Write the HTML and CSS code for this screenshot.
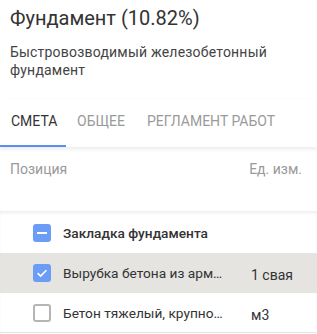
FILE: index.html
```html
<!DOCTYPE html>
<html lang="ru">
<head>
<meta charset="utf-8">
<link rel="stylesheet" href="styles.css">
</head>
<body>
<div class="page">
  <h1 class="title">Фундамент (10.82%)</h1>
  <p class="desc">Быстровозводимый железобетонный фундамент</p>
  <div class="tabs">
    <div class="tab active">СМЕТА</div>
    <div class="tab">ОБЩЕЕ</div>
    <div class="tab">РЕГЛАМЕНТ РАБОТ</div>
  </div>
  <div class="head">
    <span class="h-name">Позиция</span>
    <span class="h-unit">Ед. изм.</span>
  </div>
  <div class="rows">
    <div class="row">
      <span class="cb cb-ind"><svg width="18" height="18" viewBox="0 0 18 18"><rect x="4" y="8" width="10" height="2" fill="#fff"/></svg></span>
      <span class="name bold">Закладка фундамента</span>
    </div>
    <div class="row sel">
      <span class="cb cb-on"><svg width="18" height="18" viewBox="0 0 18 18"><path d="M4.6 9.2 L7.6 12.1 L13.4 6.2" fill="none" stroke="#fff" stroke-width="1.6"/></svg></span>
      <span class="name">Вырубка бетона из арматурного каркаса</span>
      <span class="unit">1 свая</span>
    </div>
    <div class="row last">
      <span class="cb cb-off"></span>
      <span class="name">Бетон тяжелый, крупность заполнителя</span>
      <span class="unit">м3</span>
    </div>
  </div>
</div>
</body>
</html>
```
FILE: styles.css
```css
* { box-sizing: border-box; }
html, body { margin: 0; padding: 0; background: #fff; }
body {
  font-family: Roboto, "Noto Sans", Arial, sans-serif;
  color: #333;
  width: 317px;
  overflow: hidden;
}
.title {
  margin: 0;
  padding: 6px 0 0 10px;
  font-size: 20px;
  line-height: 24px;
  font-weight: 400;
  color: #333;
}
.desc {
  margin: 13px 0 0 0;
  padding: 0 10px 0 10px;
  font-size: 14px;
  line-height: 18px;
  color: #444;
  letter-spacing: 0.2px;
}
.tabs {
  margin-top: 20px;
  display: flex;
  height: 48px;
  position: relative;
  box-shadow: 0 2px 4px rgba(0,0,0,0.09);
  z-index: 1;
}
.tab {
  padding: 12px 11px 0 11px;
  font-size: 14px;
  line-height: 20px;
  color: #9a9a9a;
}
.tab.active {
  color: #333;
  width: 66px;
  border-bottom: 2px solid #5b8ef0;
}
.head {
  display: flex;
  height: 64px;
  padding: 12px 15px 0 10px;
  font-size: 14px;
  line-height: 20px;
  color: #999;
}
.h-name { flex: 1; }
.rows {
  padding-top: 2px;
  box-shadow: inset 0 3px 4px -2px rgba(0,0,0,0.1);
}
.row {
  display: flex;
  align-items: center;
  height: 40px;
  padding-left: 33px;
  font-size: 13.7px;
  line-height: 20px;
  color: #333;
}
.row.sel { background: #e5e4e1; }
.row.last { border-bottom: 1px solid #e4e4e4; }
.cb {
  width: 18px;
  height: 18px;
  border-radius: 3px;
  flex: none;
  display: block;
}
.cb svg { display: block; }
.cb-ind, .cb-on { background: #6b9df7; }
.cb-off { border: 2px solid #b5b5b5; background: #fff; }
.name {
  margin-left: 12px;
  width: 160px;
  white-space: nowrap;
  overflow: hidden;
  text-overflow: ellipsis;
}
.name.bold { width: auto; font-weight: 500; }
.unit {
  margin-left: 28px;
  padding-top: 4px;
  font-size: 14px;
}
```
